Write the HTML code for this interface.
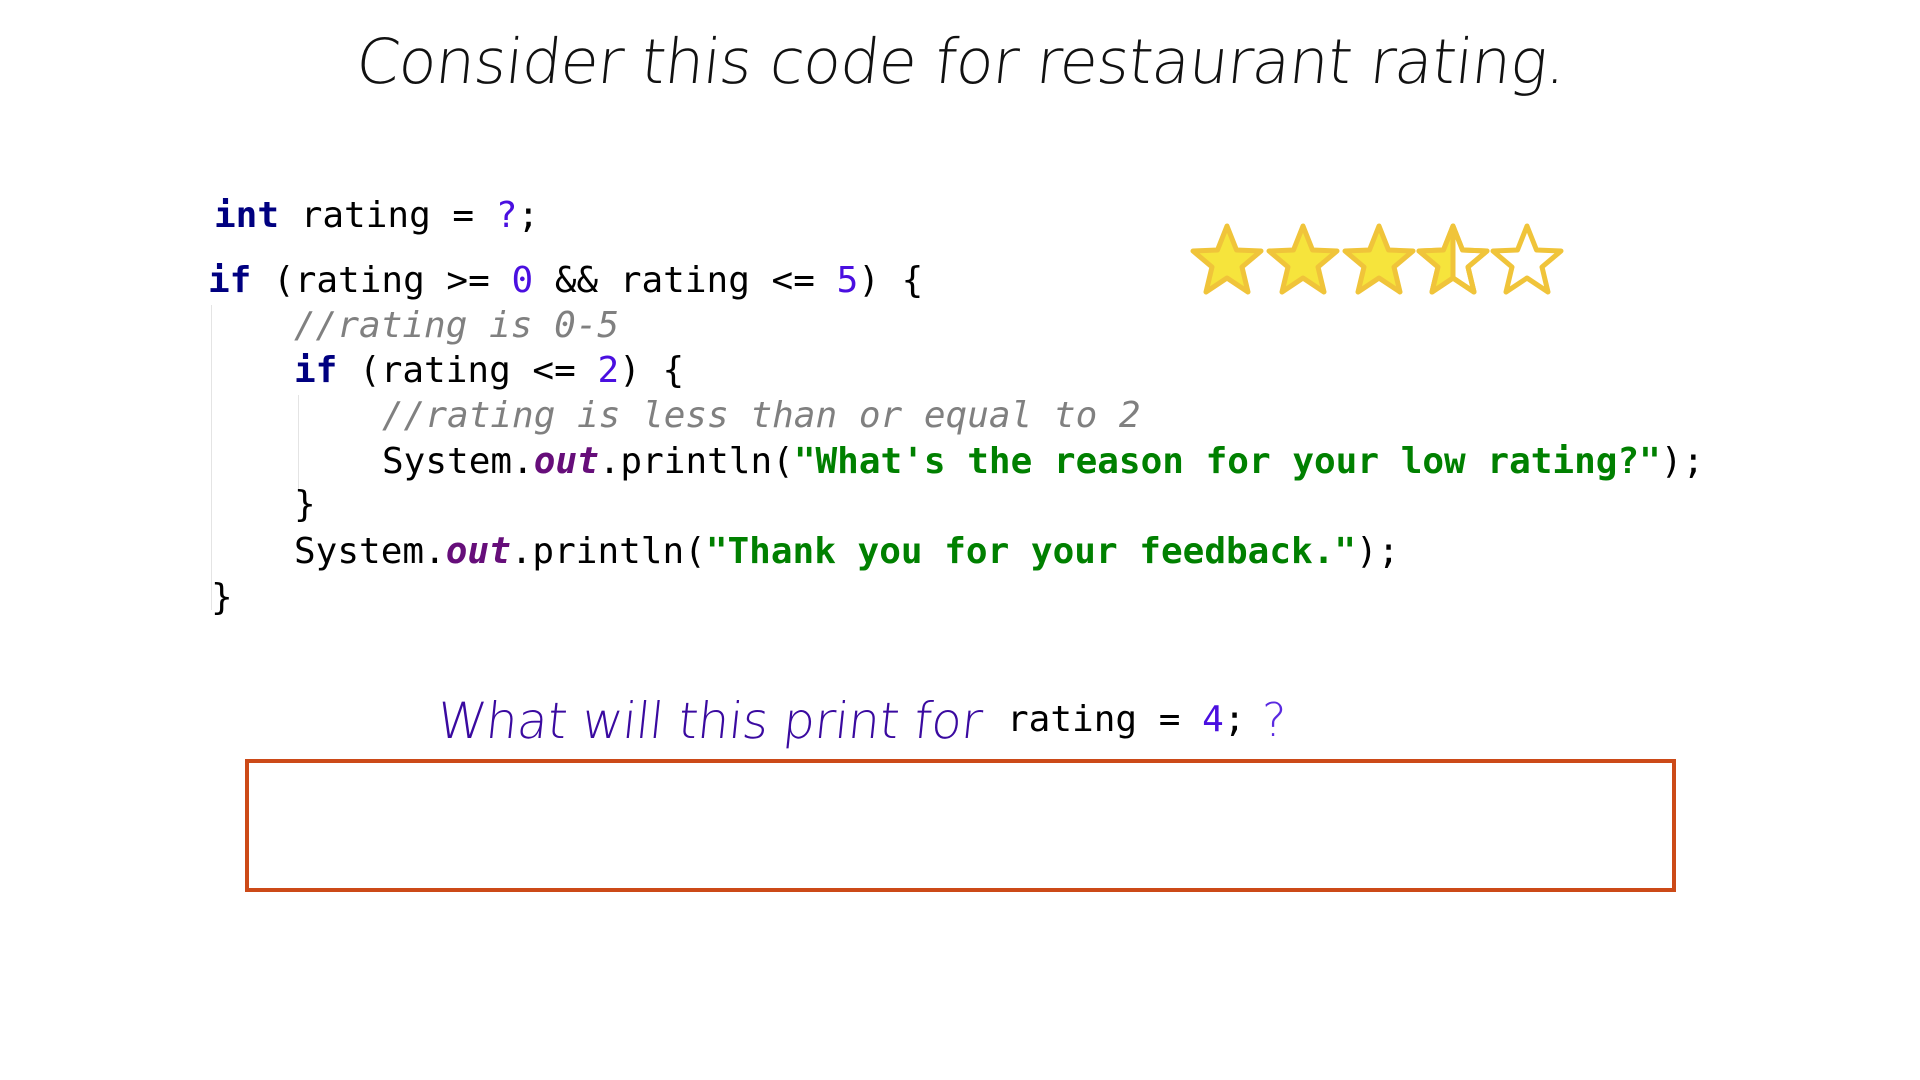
<!DOCTYPE html>
<html><head><meta charset="utf-8"><style>
html,body{margin:0;padding:0;background:#fff;width:1920px;height:1080px;overflow:hidden;position:relative}
.c{position:absolute;font-family:"DejaVu Sans Mono","Liberation Mono",monospace;font-size:36px;line-height:46px;white-space:pre;color:#000;transform:translateY(-23px)}
.k{color:#000080;font-weight:bold}
.n{color:#4a0fe0}
.o{color:#660e7a;font-weight:bold;font-style:italic}
.s{color:#008000;font-weight:bold}
.m{color:#808080;font-style:italic}
.g{position:absolute;width:1px;background:#e4e4e4}
svg{position:absolute;left:0;top:0}
</style></head><body>
<svg width="1920" height="1080">
<defs><clipPath id="h"><rect x="-50" y="-50" width="50" height="100"/></clipPath></defs>
<text x="355" y="83" textLength="1210" lengthAdjust="spacing" font-family="DejaVu Sans, Liberation Sans, sans-serif" font-weight="200" font-size="62" fill="#111" transform="skewX(-6) translate(8,0)">Consider this code for restaurant rating.</text>
<text x="435" y="738" textLength="545" lengthAdjust="spacing" font-family="DejaVu Sans, Liberation Sans, sans-serif" font-weight="200" font-size="50" fill="#3a0aa0" transform="skewX(-6) translate(78,0)">What will this print for</text>
<text x="1262" y="736" font-family="DejaVu Sans, Liberation Sans, sans-serif" font-weight="200" font-size="46" fill="#5a2ae0">?</text>
<g stroke="#f0c43a" stroke-width="5" stroke-linejoin="round">
<path d="M0,-36 L9.5,-12 L34,-11 L15,5 L21,30 L0,16 L-21,30 L-15,5 L-34,-11 L-9.5,-12 Z" transform="translate(1227,262)" fill="#f6e43c"/>
<path d="M0,-36 L9.5,-12 L34,-11 L15,5 L21,30 L0,16 L-21,30 L-15,5 L-34,-11 L-9.5,-12 Z" transform="translate(1303,262)" fill="#f6e43c"/>
<path d="M0,-36 L9.5,-12 L34,-11 L15,5 L21,30 L0,16 L-21,30 L-15,5 L-34,-11 L-9.5,-12 Z" transform="translate(1379,262)" fill="#f6e43c"/>
<g transform="translate(1453,262)">
<path d="M0,-36 L9.5,-12 L34,-11 L15,5 L21,30 L0,16 L-21,30 L-15,5 L-34,-11 L-9.5,-12 Z" fill="#fff"/>
<path d="M0,-36 L9.5,-12 L34,-11 L15,5 L21,30 L0,16 L-21,30 L-15,5 L-34,-11 L-9.5,-12 Z" fill="#f6e43c" stroke="none" clip-path="url(#h)"/>
<path d="M0,-36 L9.5,-12 L34,-11 L15,5 L21,30 L0,16 L-21,30 L-15,5 L-34,-11 L-9.5,-12 Z" fill="none"/>
<line x1="0" y1="-34" x2="0" y2="16"/>
</g>
<path d="M0,-36 L9.5,-12 L34,-11 L15,5 L21,30 L0,16 L-21,30 L-15,5 L-34,-11 L-9.5,-12 Z" transform="translate(1527,262)" fill="#fff"/>
</g>
<rect x="247" y="761" width="1427" height="129" fill="none" stroke="#cc4a18" stroke-width="4"/>
</svg>
<div class="g" style="left:211px;top:305px;height:305px"></div>
<div class="g" style="left:298px;top:395px;height:95px"></div>
<div class="c" style="left:214px;top:216px"><span class="k">int</span> rating = <span class="n">?</span>;</div>
<div class="c" style="left:208px;top:281px"><span class="k">if</span> (rating &gt;= <span class="n">0</span> &amp;&amp; rating &lt;= <span class="n">5</span>) {</div>
<div class="c" style="left:294px;top:326px"><span class="m">//rating is 0-5</span></div>
<div class="c" style="left:294px;top:371px"><span class="k">if</span> (rating &lt;= <span class="n">2</span>) {</div>
<div class="c" style="left:382px;top:416px"><span class="m">//rating is less than or equal to 2</span></div>
<div class="c" style="left:382px;top:462px">System.<span class="o">out</span>.println(<span class="s">"What's the reason for your low rating?"</span>);</div>
<div class="c" style="left:294px;top:505px">}</div>
<div class="c" style="left:294px;top:552px">System.<span class="o">out</span>.println(<span class="s">"Thank you for your feedback."</span>);</div>
<div class="c" style="left:211px;top:598px">}</div>
<div class="c" style="left:1007px;top:720px">rating = <span class="n">4</span>;</div>
</body></html>
